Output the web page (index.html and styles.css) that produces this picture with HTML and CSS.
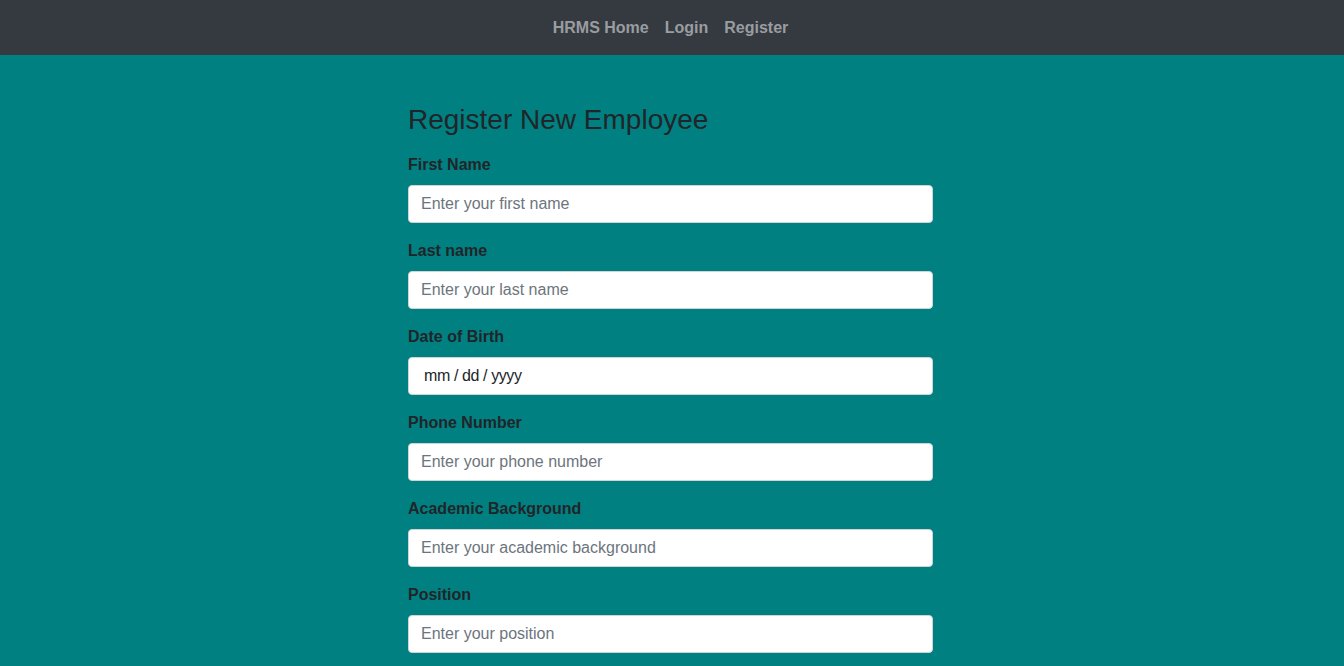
FILE: index.html
```html
<!DOCTYPE html>
<html lang="en">
<head>
<meta charset="utf-8">
<title>Register New Employee</title>
<link rel="stylesheet" href="styles.css">
</head>
<body>
<nav class="navbar">
  <a class="nav-link" href="#">HRMS Home</a>
  <a class="nav-link" href="#">Login</a>
  <a class="nav-link" href="#">Register</a>
</nav>
<main class="page">
  <div class="container">
    <h3 class="title">Register New Employee</h3>
    <form class="form">
      <div class="form-group">
        <label class="label">First Name</label>
        <input class="input" type="text" placeholder="Enter your first name">
      </div>
      <div class="form-group">
        <label class="label">Last name</label>
        <input class="input" type="text" placeholder="Enter your last name">
      </div>
      <div class="form-group">
        <label class="label">Date of Birth</label>
        <input class="input input-date" type="text" placeholder="mm / dd / yyyy">
      </div>
      <div class="form-group">
        <label class="label">Phone Number</label>
        <input class="input" type="text" placeholder="Enter your phone number">
      </div>
      <div class="form-group">
        <label class="label">Academic Background</label>
        <input class="input" type="text" placeholder="Enter your academic background">
      </div>
      <div class="form-group">
        <label class="label">Position</label>
        <input class="input" type="text" placeholder="Enter your position">
      </div>
    </form>
  </div>
</main>
</body>
</html>
```
FILE: styles.css
```css
* { box-sizing: border-box; }
html, body {
  margin: 0;
  padding: 0;
}
body {
  font-family: "Liberation Sans", Arial, sans-serif;
  font-size: 16px;
  line-height: 1.5;
  color: #212529;
  background: #008080;
}
.navbar {
  height: 55px;
  background: #343a40;
  display: flex;
  justify-content: center;
  align-items: center;
  padding-right: 3px;
}
.nav-link {
  color: #9a9da0;
  font-weight: bold;
  text-decoration: none;
  padding: 8px 8px;
  line-height: 24px;
}
.page {
  padding-top: 48px;
  padding-bottom: 40px;
}
.container {
  width: 525px;
  margin-left: 408px;
}
.title {
  font-size: 28px;
  font-weight: normal;
  line-height: 1.2;
  margin: 0 0 16px 0;
  color: #212529;
}
.form-group {
  margin-bottom: 16px;
}
.label {
  display: block;
  font-weight: bold;
  margin-bottom: 8px;
  line-height: 24px;
}
.input {
  display: block;
  width: 100%;
  height: 38px;
  padding: 6px 12px;
  font-family: inherit;
  font-size: 16px;
  line-height: 24px;
  color: #495057;
  background: #fff;
  border: 1px solid #ced4da;
  border-radius: 4px;
  outline: none;
}
.input::placeholder {
  color: #6c757d;
  opacity: 1;
}
.input-date {
  padding-left: 15px;
}
.input-date::placeholder {
  color: #212529;
  letter-spacing: -0.4px;
}
```
